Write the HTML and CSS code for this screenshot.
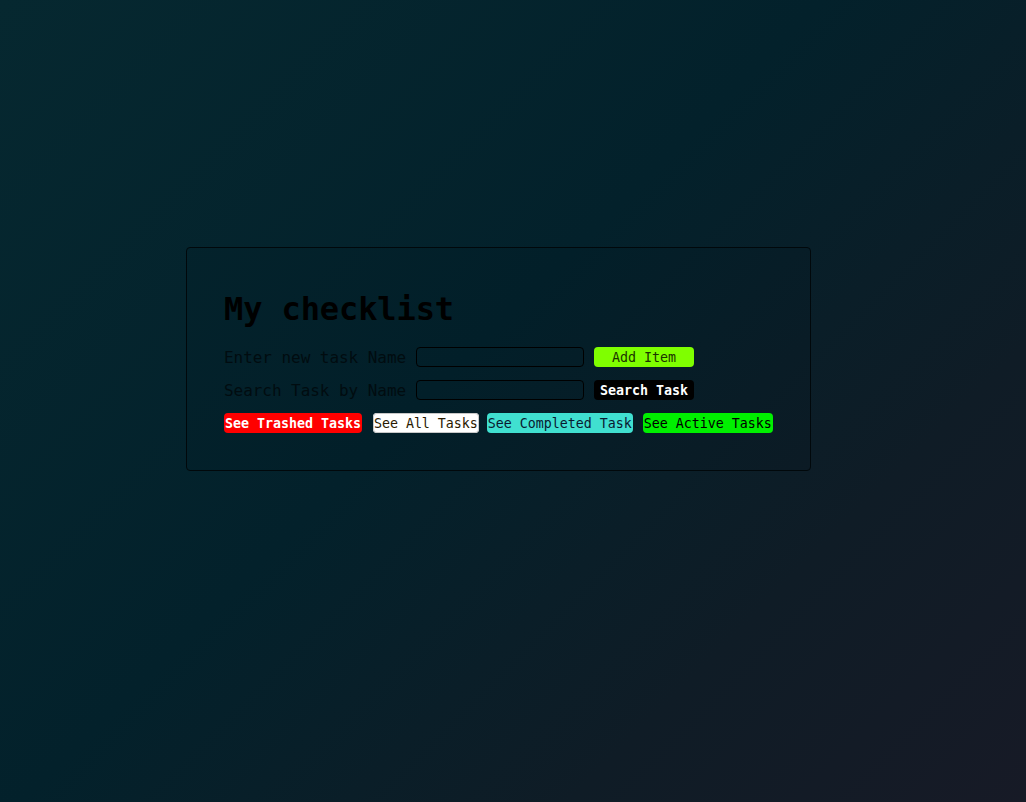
FILE: index.html
```html
<!DOCTYPE html>
<html lang="en">
<head>
<meta charset="utf-8">
<title>My checklist</title>
<link rel="stylesheet" href="styles.css">
</head>
<body>
<main class="page">
  <section class="card">
    <h1 class="title">My checklist</h1>
    <div class="row">
      <label class="label" for="new-task">Enter new task Name</label>
      <input class="field" id="new-task" type="text">
      <button class="btn btn-fixed btn-add">Add Item</button>
    </div>
    <div class="row">
      <label class="label" for="search-task">Search Task by Name</label>
      <input class="field" id="search-task" type="text">
      <button class="btn btn-fixed btn-search">Search Task</button>
    </div>
    <div class="row">
      <button class="btn btn-trash">See Trashed Tasks</button>
      <button class="btn btn-all">See All Tasks</button>
      <button class="btn btn-completed">See Completed Task</button>
      <button class="btn btn-active">See Active Tasks</button>
    </div>
  </section>
</main>
</body>
</html>
```

FILE: styles.css
```css
* { box-sizing: border-box; }

html, body {
  margin: 0;
  height: 100%;
}

body {
  background: linear-gradient(135deg, #062830 0%, #03212b 45%, #0f1c26 75%, #171a26 100%);
  font-family: "DejaVu Sans Mono", "Liberation Mono", monospace;
  color: #010c10;
}

.page {
  min-height: 802px;
  padding: 247px 0 0 186px;
}

.card {
  width: 625px;
  border: 1px solid #01080b;
  border-radius: 4px;
  padding: 40px 37px 37px;
  background: rgba(0, 0, 0, 0.04);
}

.title {
  margin: 0 0 18px;
  padding-top: 1px;
  font-size: 32px;
  line-height: 40px;
  font-weight: 600;
  color: #000;
  letter-spacing: -0.1px;
}

.row {
  display: flex;
  align-items: center;
  gap: 10px;
  height: 20px;
  margin-bottom: 13px;
}

.row:last-child { margin-bottom: 0; }

.label {
  flex-shrink: 0;
  white-space: nowrap;
  font-size: 16px;
  line-height: 20px;
  padding-top: 2px;
  letter-spacing: -0.05px;
  color: #010c10;
}

.field {
  flex-shrink: 0;
  width: 168px;
  height: 20px;
  border: 1px solid #000;
  border-radius: 4px;
  background: transparent;
  padding: 0 4px;
  font-family: inherit;
  color: #000;
  outline: none;
}

.btn {
  flex-shrink: 0;
  white-space: nowrap;
  height: 20px;
  border: none;
  border-radius: 4px;
  padding: 2px 1px 0;
  font-family: "DejaVu Sans Mono", "Liberation Mono", monospace;
  font-size: 13.333px;
  line-height: 18px;
  letter-spacing: -0.03px;
  cursor: pointer;
  color: #000;
}

.btn-fixed {
  width: 100px;
}

.btn-add { background: #7fff00; color: #1b3300; }
.btn-search { background: #000; color: #fff; font-weight: bold; }
.btn-trash { background: #ff0000; color: #fff; font-weight: bold; margin-right: 1px; }
.btn-all { background: #fff; color: #2a1a00; box-shadow: inset 0 0 0 1px #c8c8c8; margin-right: -2px; }
.btn-completed { background: #40e0d0; color: #0a1a30; }
.btn-active { background: #00f000; color: #000; }
```
